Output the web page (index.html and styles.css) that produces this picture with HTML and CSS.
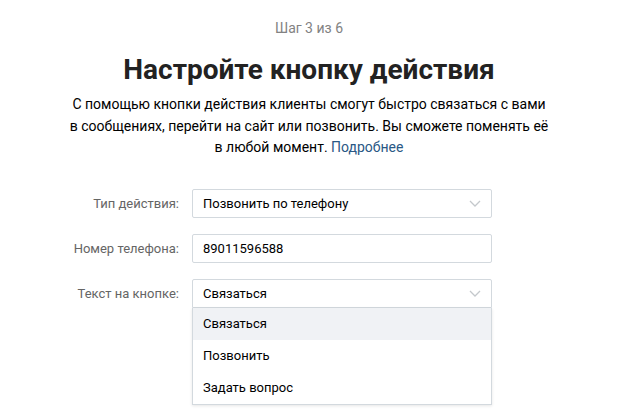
FILE: index.html
```html
<html>
<head>
	<link rel="stylesheet" href="styles.css">
</head>
<body>
	<div class="page">
		<div class="step">Шаг 3 из 6</div>
		<h1 class="title">Настройте кнопку действия</h1>
		<p class="lead">С помощью кнопки действия клиенты смогут быстро связаться с вами<br>в сообщениях, перейти на сайт или позвонить. Вы сможете поменять её<br>в любой момент. <a href="#">Подробнее</a></p>

		<div class="form">
			<div class="row">
				<div class="label">Тип действия:</div>
				<div class="field select">
					<span>Позвонить по телефону</span>
					<svg class="chevron" width="12" height="7" viewBox="0 0 12 7"><path d="M1 1l5 5 5-5" fill="none" stroke="#c4c8cc" stroke-width="1.3"/></svg>
				</div>
			</div>
			<div class="row">
				<div class="label">Номер телефона:</div>
				<div class="field"><span>89011596588</span></div>
			</div>
			<div class="row">
				<div class="label">Текст на кнопке:</div>
				<div class="combo">
					<div class="field select open">
						<span>Связаться</span>
						<svg class="chevron" width="12" height="7" viewBox="0 0 12 7"><path d="M1 1l5 5 5-5" fill="none" stroke="#c4c8cc" stroke-width="1.3"/></svg>
					</div>
					<div class="menu">
						<div class="item active">Связаться</div>
						<div class="item">Позвонить</div>
						<div class="item">Задать вопрос</div>
					</div>
				</div>
			</div>
		</div>
	</div>
</body>
</html>
```

FILE: styles.css
```css
html, body {
	margin: 0;
	background: #fff;
	font-family: Roboto, "Open Sans", sans-serif;
	color: #000;
}
.page {
	width: 618px;
	padding-top: 19px;
	text-align: center;
}
.step {
	font-size: 14px;
	line-height: 18px;
	color: #828282;
}
.title {
	margin: 16px 0 0;
	font-size: 28px;
	font-weight: 700;
	line-height: 33px;
	color: #222;
}
.lead {
	margin: 8px 0 0;
	font-size: 14px;
	line-height: 21.5px;
	color: #000;
}
.lead a {
	color: #2a5885;
	text-decoration: none;
}
.form {
	margin-top: 30px;
	display: flex;
	flex-direction: column;
	gap: 16px;
	text-align: left;
}
.row {
	display: flex;
	align-items: flex-start;
}
.label {
	width: 192px;
	padding-right: 13px;
	box-sizing: border-box;
	text-align: right;
	font-size: 13px;
	line-height: 29px;
	color: #656565;
}
.field {
	width: 300px;
	height: 29px;
	box-sizing: border-box;
	border: 1px solid #d3d9de;
	border-radius: 2px;
	padding: 0 10px;
	display: flex;
	align-items: center;
	justify-content: space-between;
	font-size: 13px;
	color: #000;
}
.combo {
	width: 300px;
}
.field.open {
	border-radius: 2px 2px 0 0;
}
.menu {
	border: 1px solid #d3d9de;
	border-top: none;
	box-shadow: 0 1px 3px rgba(0, 0, 0, 0.1);
}
.item {
	height: 32px;
	line-height: 32px;
	padding-left: 10px;
	font-size: 13px;
	color: #000;
}
.item.active {
	background: #f0f2f5;
}
```
